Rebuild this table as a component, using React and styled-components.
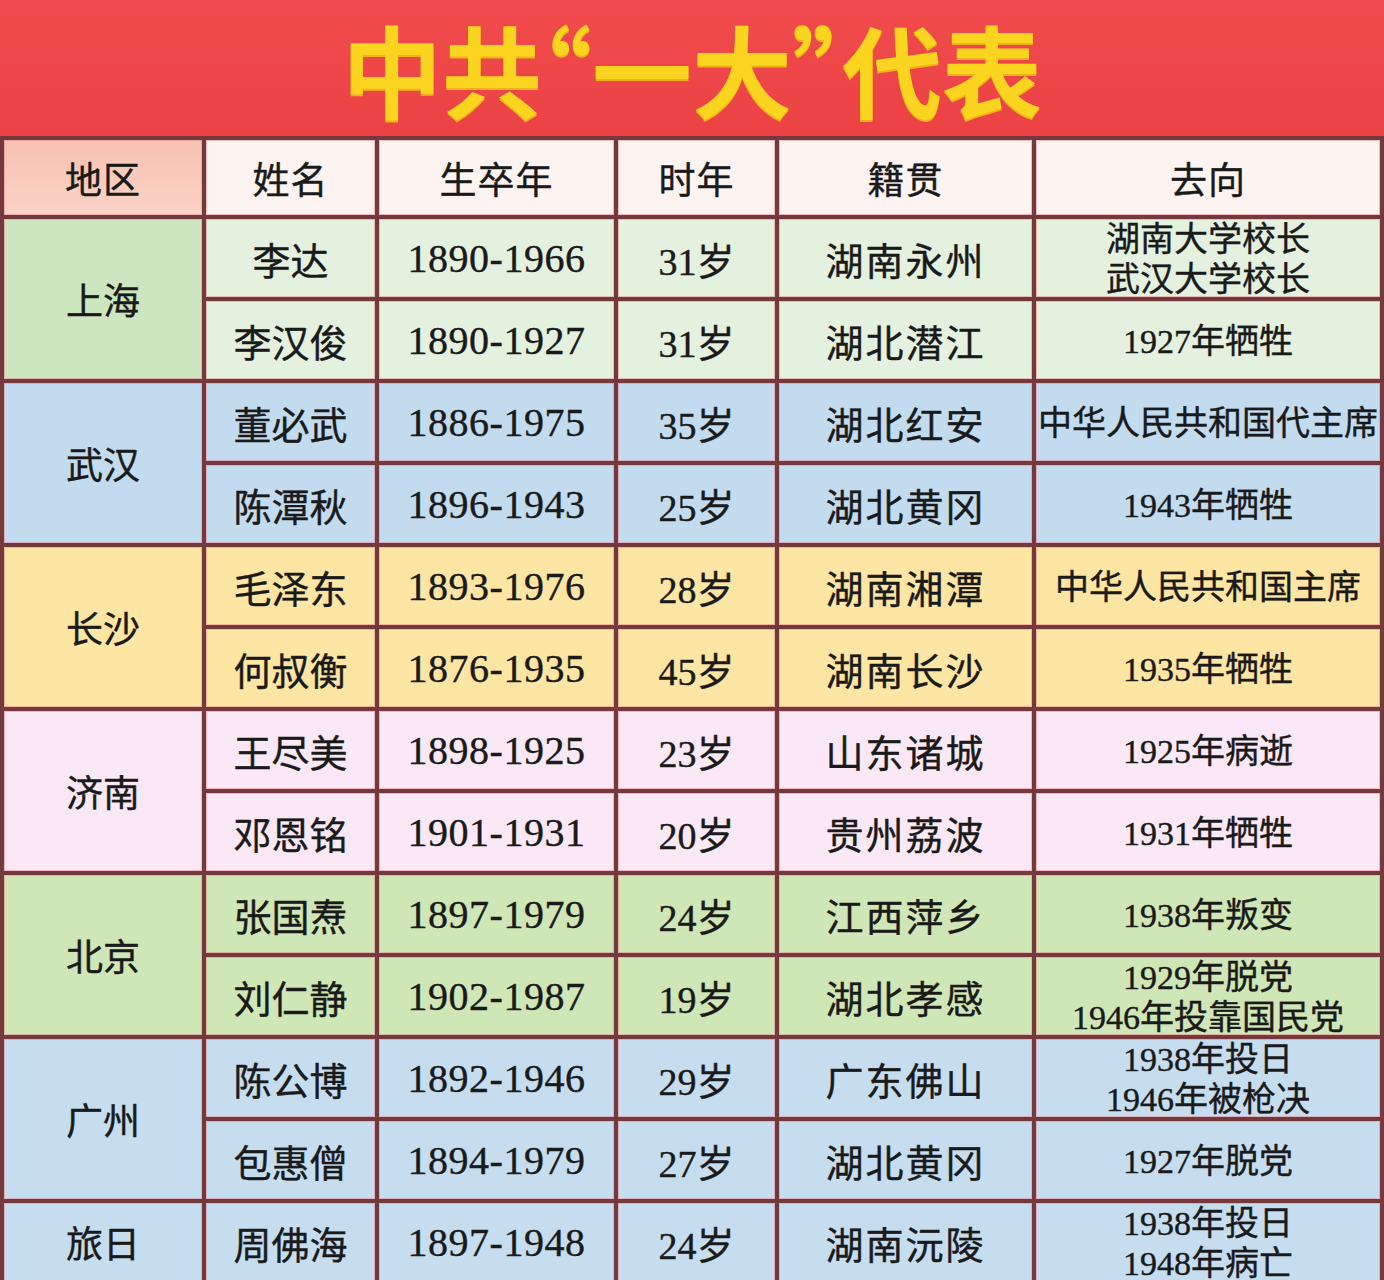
import React from "react";
import styled, { createGlobalStyle } from "styled-components";

const GlobalStyle = createGlobalStyle`
  body {
    margin: 0;
    background: #8a4a4e;
    font-family: "Liberation Serif", "Noto Sans CJK SC", serif;
  }
`;

const groups = [
  {
    region: "上海",
    regionBg: "#cde6bf",
    bg: "#e3f1de",
    rows: [
      ["李达", "1890-1966", "31岁", "湖南永州", ["湖南大学校长", "武汉大学校长"]],
      ["李汉俊", "1890-1927", "31岁", "湖北潜江", ["1927年牺牲"]],
    ],
  },
  {
    region: "武汉",
    regionBg: "#c3dbef",
    bg: "#c3dbef",
    rows: [
      ["董必武", "1886-1975", "35岁", "湖北红安", ["中华人民共和国代主席"]],
      ["陈潭秋", "1896-1943", "25岁", "湖北黄冈", ["1943年牺牲"]],
    ],
  },
  {
    region: "长沙",
    regionBg: "#fde5a3",
    bg: "#fde5a3",
    rows: [
      ["毛泽东", "1893-1976", "28岁", "湖南湘潭", ["中华人民共和国主席"]],
      ["何叔衡", "1876-1935", "45岁", "湖南长沙", ["1935年牺牲"]],
    ],
  },
  {
    region: "济南",
    regionBg: "#fbe8f7",
    bg: "#fbe8f7",
    rows: [
      ["王尽美", "1898-1925", "23岁", "山东诸城", ["1925年病逝"]],
      ["邓恩铭", "1901-1931", "20岁", "贵州荔波", ["1931年牺牲"]],
    ],
  },
  {
    region: "北京",
    regionBg: "#cfe6b6",
    bg: "#cfe6b6",
    rows: [
      ["张国焘", "1897-1979", "24岁", "江西萍乡", ["1938年叛变"]],
      ["刘仁静", "1902-1987", "19岁", "湖北孝感", ["1929年脱党", "1946年投靠国民党"]],
    ],
  },
  {
    region: "广州",
    regionBg: "#c6ddf0",
    bg: "#c6ddf0",
    rows: [
      ["陈公博", "1892-1946", "29岁", "广东佛山", ["1938年投日", "1946年被枪决"]],
      ["包惠僧", "1894-1979", "27岁", "湖北黄冈", ["1927年脱党"]],
    ],
  },
  {
    region: "旅日",
    regionBg: "#c6ddf0",
    bg: "#c6ddf0",
    rows: [["周佛海", "1897-1948", "24岁", "湖南沅陵", ["1938年投日", "1948年病亡"]]],
  },
];

const headers = ["地区", "姓名", "生卒年", "时年", "籍贯", "去向"];

export default function App() {
  return (
    <>
      <GlobalStyle />
      <Page>
        <TitleBar>
          <Title>中共“一大”代表</Title>
        </TitleBar>
        <Table>
          {headers.map((h, i) => (
            <HeadCell key={h} $first={i === 0}>
              {h}
            </HeadCell>
          ))}
          {groups.map((g) =>
            g.rows.map((r, ri) => (
              <React.Fragment key={r[0]}>
                {ri === 0 && (
                  <RegionCell $bg={g.regionBg} $span={g.rows.length}>
                    {g.region}
                  </RegionCell>
                )}
                <Cell $bg={g.bg}>{r[0]}</Cell>
                <Cell $bg={g.bg} $year>
                  {r[1]}
                </Cell>
                <Cell $bg={g.bg}>{r[2]}</Cell>
                <Cell $bg={g.bg} $spaced>
                  {r[3]}
                </Cell>
                <FateCell $bg={g.bg}>
                  {r[4].map((line) => (
                    <span key={line}>{line}</span>
                  ))}
                </FateCell>
              </React.Fragment>
            ))
          )}
        </Table>
      </Page>
    </>
  );
}

const Page = styled.div`
  width: 1384px;
  overflow: hidden;
`;

const TitleBar = styled.header`
  height: 136px;
  background: linear-gradient(180deg, #f04b4c 0%, #ec4245 100%);
  display: flex;
  justify-content: center;
  align-items: center;
`;

const Title = styled.h1`
  margin: 0;
  font-family: "Noto Sans CJK SC", sans-serif;
  font-size: 100px;
  font-weight: 700;
  line-height: 1.2;
  color: #fad41f;
  text-shadow: 0 2px 0 #f0b21a;
  font-feature-settings: "halt";
  white-space: nowrap;
`;

const Table = styled.div`
  display: grid;
  grid-template-columns: 198px 169px 235px 157px 253px 344px;
  grid-template-rows: 75px;
  grid-auto-rows: 78px;
  gap: 4px;
  padding: 4px 4px 0;
  background: #74393d;
`;

const BaseCell = styled.div`
  display: flex;
  align-items: center;
  justify-content: center;
  color: #1a1a1a;
  -webkit-text-stroke: 0.4px #1a1a1a;
  box-shadow: inset 0 0 0 1px rgba(236, 140, 150, 0.55);
`;

const HeadCell = styled(BaseCell)`
  background: ${(p) =>
    p.$first
      ? "linear-gradient(180deg, #f7c2b1 0%, #fbd3c7 100%)"
      : "#fdf4f2"};
  font-size: 37px;
  letter-spacing: 1px;
`;

const RegionCell = styled(BaseCell)`
  grid-row: span ${(p) => p.$span};
  background: ${(p) => p.$bg};
  font-size: 37px;
`;

const Cell = styled(BaseCell)`
  background: ${(p) => p.$bg};
  font-size: ${(p) => (p.$year ? "40px" : "38px")};
  letter-spacing: ${(p) => (p.$spaced ? "2px" : p.$year ? "0.5px" : "0")};
`;

const FateCell = styled(BaseCell)`
  background: ${(p) => p.$bg};
  flex-direction: column;
  font-size: 34px;
  line-height: 40px;
  padding-top: 4px;
  white-space: nowrap;
`;
